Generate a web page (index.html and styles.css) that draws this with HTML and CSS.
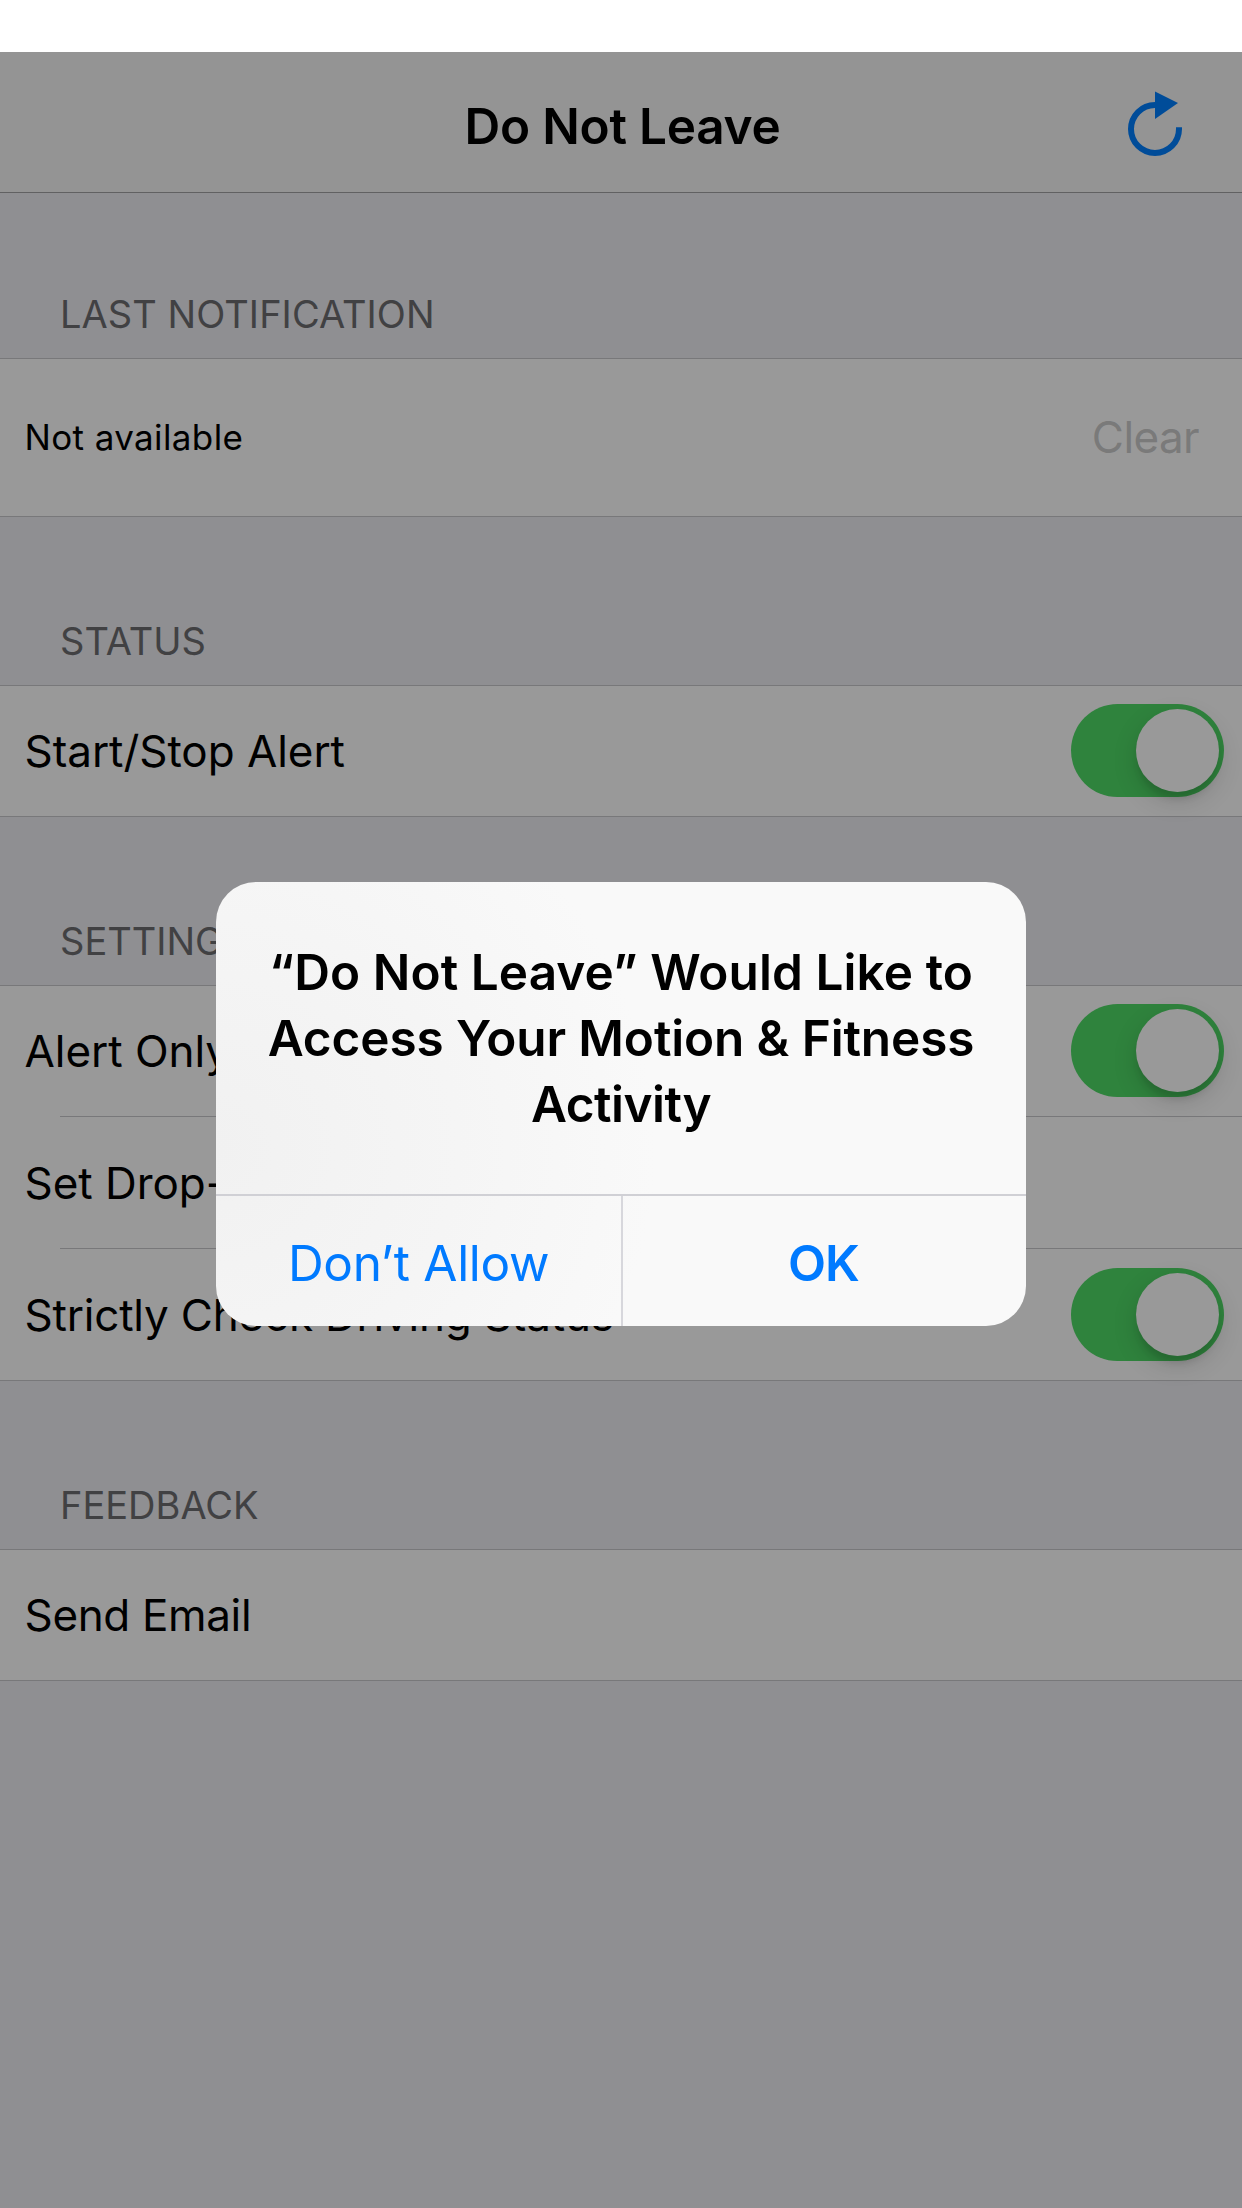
FILE: index.html
```html
<!DOCTYPE html>
<html lang="en">
<head>
<meta charset="utf-8">
<title>Do Not Leave</title>
<link rel="stylesheet" href="styles.css">
</head>
<body>
<div class="screen">
  <header class="navbar">
    <span class="navbar-side"></span>
    <h1 class="navbar-title">Do Not Leave</h1>
    <span class="navbar-side navbar-action">
      <svg class="refresh" viewBox="0 0 54 66" width="54" height="66" aria-label="Refresh">
        <path d="M51 36.3V38A24 24 0 1 1 27 14" fill="none" stroke="#004c99" stroke-width="6"/>
        <path d="M27 0.5L50 12L27 28Z" fill="#004c99"/>
      </svg>
    </span>
  </header>

  <main class="settings">
    <h2 class="section-title first">LAST NOTIFICATION</h2>
    <section class="card">
      <div class="row tall"><span class="note">Not available</span><span class="clear">Clear</span></div>
    </section>

    <h2 class="section-title">STATUS</h2>
    <section class="card">
      <div class="row"><span>Start/Stop Alert</span><span class="switch"><span class="knob"></span></span></div>
    </section>

    <h2 class="section-title">SETTINGS</h2>
    <section class="card">
      <div class="row"><span>Alert Only</span><span class="switch"><span class="knob"></span></span></div>
      <div class="separator"></div>
      <div class="row middle"><span>Set Drop-</span></div>
      <div class="separator"></div>
      <div class="row middle"><span class="long">Strictly Check Driving Status</span><span class="switch"><span class="knob"></span></span></div>
    </section>

    <h2 class="section-title">FEEDBACK</h2>
    <section class="card">
      <div class="row"><span class="email">Send Email</span></div>
    </section>
  </main>

  <div class="alert" role="alertdialog">
    <div class="alert-title">
      <span class="line-one">“Do Not Leave” Would Like to</span>
      <span class="line-two">Access Your Motion &amp; Fitness</span>
      <span class="line-three">Activity</span>
    </div>
    <div class="alert-buttons">
      <div class="alert-button">Don’t Allow</div>
      <div class="alert-button primary">OK</div>
    </div>
  </div>
</div>
</body>
</html>
```
FILE: styles.css
```css
* {
  box-sizing: border-box;
}

body {
  margin: 0;
  background: #fff;
  font-family: "Inter", "Liberation Sans", sans-serif;
  color: #000;
}

.screen {
  position: relative;
  height: 2208px;
  padding-top: 52px;
  display: flex;
  flex-direction: column;
  overflow: hidden;
}

.navbar {
  height: 141px;
  padding: 8px 60px 0;
  display: flex;
  align-items: center;
  background: #949494;
  border-bottom: 1px solid #616162;
}

.navbar-side {
  flex: 1;
  display: flex;
  justify-content: flex-end;
}

.refresh {
  display: block;
  margin-top: -5px;
}

.navbar-title {
  margin: 0;
  padding-left: 3px;
  font-size: 49.5px;
  font-weight: 600;
  letter-spacing: -0.23px;
}

.settings {
  flex: 1;
  background: #8f8f92;
}

.section-title {
  height: 168px;
  margin: 0;
  padding: 0 60px 21px;
  display: flex;
  align-items: flex-end;
  font-size: 38px;
  font-weight: 400;
  line-height: 46px;
  color: #414143;
}

.section-title.first {
  height: 165px;
  letter-spacing: 0.06px;
}

.card {
  background: #999;
  border-top: 1px solid #78787a;
  border-bottom: 1px solid #78787a;
}

.row {
  height: 130px;
  padding: 0 18px 0 24.5px;
  display: flex;
  align-items: center;
  justify-content: space-between;
  font-size: 44px;
  letter-spacing: -0.05px;
}

.row.tall {
  height: 157px;
  padding-right: 43px;
  padding-bottom: 2px;
}

.row.middle {
  height: 131px;
}

.long {
  letter-spacing: -0.2px;
}

.email {
  letter-spacing: -0.35px;
}

.note {
  font-size: 35px;
  letter-spacing: 0.38px;
}

.clear {
  letter-spacing: -0.6px;
  color: #7a7a7a;
}

.separator {
  height: 1px;
  margin-left: 60px;
  background: #78787a;
}

.switch {
  width: 153px;
  height: 93px;
  margin-bottom: 1px;
  padding: 5px;
  display: flex;
  justify-content: flex-end;
  border-radius: 47px;
  background: #2f833d;
}

.knob {
  width: 83px;
  height: 83px;
  border-radius: 50%;
  background: #999;
  box-shadow: 0 9px 24px rgba(0, 0, 0, 0.15), 0 9px 6px -2px rgba(0, 0, 0, 0.1);
}

.alert {
  position: absolute;
  left: 216px;
  top: 882px;
  width: 810px;
  height: 444px;
  display: flex;
  flex-direction: column;
  border-radius: 40px;
  overflow: hidden;
  background: radial-gradient(ellipse 440px 420px at 0 60%, #f1f1f1, #f5f5f5 55%, #f9f9f9);
}

.alert-title {
  height: 312px;
  padding-top: 57px;
  display: flex;
  flex-direction: column;
  align-items: center;
  font-size: 49.5px;
  font-weight: 600;
  line-height: 66px;
  white-space: nowrap;
}

.line-one {
  letter-spacing: 0.08px;
}

.line-two {
  letter-spacing: -0.12px;
}

.line-three {
  letter-spacing: -0.5px;
}

.alert-buttons {
  flex: 1;
  display: flex;
  border-top: 2px solid #d0d0d5;
}

.alert-button {
  flex: 0 0 407px;
  padding-top: 3px;
  display: flex;
  align-items: center;
  justify-content: center;
  border-right: 2px solid #d7d7dc;
  font-size: 49.5px;
  letter-spacing: -0.33px;
  color: #007aff;
}

.alert-button.primary {
  flex: 1;
  padding-right: 2px;
  border-right: 0;
  font-weight: 600;
  letter-spacing: -1px;
}
```
